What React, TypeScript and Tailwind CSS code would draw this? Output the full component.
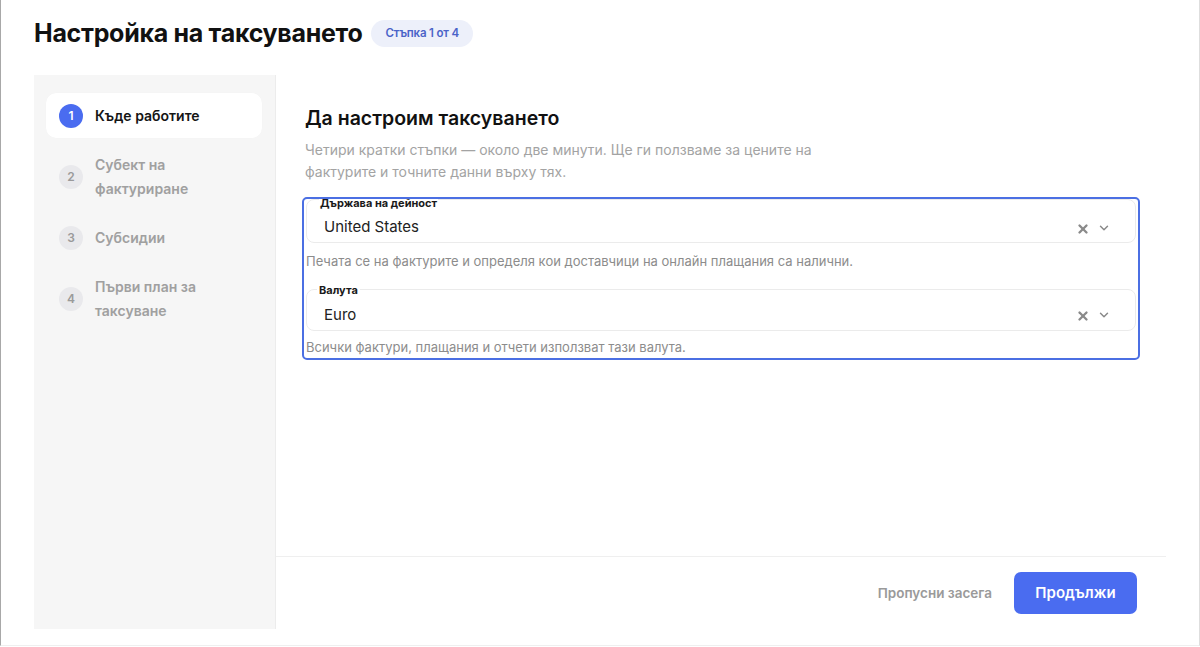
import { ChevronDown, X } from 'lucide-react';

const steps = [
  { n: 1, label: 'Къде работите' },
  { n: 2, label: 'Субект на фактуриране' },
  { n: 3, label: 'Субсидии' },
  { n: 4, label: 'Първи план за таксуване' },
];

function Select({ label, value, first }: { label: string; value: string; first?: boolean }) {
  return (
    <div
      className={
        first
          ? 'relative flex h-[44px] items-center rounded-lg border border-[#ebebeb] bg-white pl-[17px] pr-[24px] pt-[13px]'
          : 'relative flex h-[42px] items-center rounded-lg border border-[#ebebeb] bg-white pl-[17px] pr-[24px] pt-[10px]'
      }
    >
      <span
        className={
          first
            ? 'absolute left-[12px] top-[-3px] bg-white px-[1px] text-[11px] font-bold leading-[12px] text-[#1a1a1a]'
            : 'absolute left-[10px] top-[-6px] bg-white px-[2px] text-[11px] font-bold leading-[12px] text-[#1a1a1a]'
        }
      >
        {label}
      </span>
      <span className="flex-1 text-[15px] text-[#222]">{value}</span>
      <X className="mt-[2px] h-[14px] w-[14px] text-[#8a8a8a]" strokeWidth={4} />
      <ChevronDown className="ml-[7px] h-[14px] w-[14px] text-[#8a8a8a]" strokeWidth={2.5} />
    </div>
  );
}

export default function App() {
  return (
    <div
      className="h-[646px] w-[1200px] border-b border-l border-r border-b-[#efefef] border-l-[#a8a8a8] border-r-[#dedede] bg-white px-[33px]"
      style={{ fontFamily: 'Inter, "Noto Sans", sans-serif' }}
    >
      <header className="flex h-[66px] items-center gap-[9px] pt-[1px]">
        <h1 className="text-[25px] font-bold tracking-[-0.3px] text-[#111]">Настройка на таксуването</h1>
        <span className="rounded-full bg-[#edf0fa] px-[14px] py-[5px] text-[11.5px] font-semibold tracking-[-0.2px] text-[#4a63c8]">
          Стъпка 1 от 4
        </span>
      </header>

      <div className="mt-[9px] flex h-[554px]">
        <aside className="flex w-[242px] flex-col gap-[5px] border-r border-[#ececec] bg-[#f6f6f6] pl-[12px] pr-[13px] pt-[18px]">
          {steps.map((s) => {
            const active = s.n === 1;
            return (
              <div
                key={s.n}
                className={
                  active
                    ? 'flex items-center gap-[12px] rounded-[10px] bg-white py-[10.5px] pl-[13px] shadow-[0_0_1px_rgba(0,0,0,0.04)]'
                    : 'flex items-center gap-[12px] rounded-[10px] py-[10px] pl-[13px]'
                }
              >
                <span
                  className={
                    active
                      ? 'flex h-[24px] w-[24px] shrink-0 items-center justify-center rounded-full bg-[#4a6cf0] text-[12px] font-semibold text-white'
                      : 'flex h-[24px] w-[24px] shrink-0 items-center justify-center rounded-full bg-[#e9e9ec] text-[12px] font-semibold text-[#9a9a9a]'
                  }
                >
                  {s.n}
                </span>
                <span
                  className={
                    active
                      ? 'w-[140px] text-[14px] font-semibold leading-6 text-[#151515]'
                      : 'w-[140px] text-[14px] font-semibold leading-6 text-[#a0a0a0]'
                  }
                >
                  {s.label}
                </span>
              </div>
            );
          })}
        </aside>

        <section className="flex flex-1 flex-col">
          <div className="h-[481px] pl-[29px] pt-[29px]">
            <h2 className="text-[19.5px] font-semibold leading-[28px] text-[#111]">Да настроим таксуването</h2>
            <p className="mt-[7px] w-[530px] text-[14px] leading-[22px] text-[#a3a3a3]">
              Четири кратки стъпки — около две минути. Ще ги ползваме за цените на фактурите и точните данни върху тях.
            </p>

            <div className="-ml-[3px] mt-[14px] w-[838px] overflow-hidden rounded-[5px] border-2 border-[#4b6fe3] px-[2px] pb-[2px]">
              <Select label="Държава на дейност" value="United States" first />
              <p className="mt-[9px] text-[13px] leading-[18px] text-[#8c8c8c]">
                Печата се на фактурите и определя кои доставчици на онлайн плащания са налични.
              </p>
              <div className="mt-[19px]">
                <Select label="Валута" value="Euro" />
              </div>
              <p className="mt-[7px] text-[13px] leading-[18px] text-[#8c8c8c]">
                Всички фактури, плащания и отчети използват тази валута.
              </p>
            </div>
          </div>

          <footer className="flex h-[73px] items-center justify-end gap-[6px] border-t border-[#efefef] pr-[29px]">
            <button className="px-[16px] py-[10px] text-[13.5px] font-semibold text-[#9a9a9a]">Пропусни засега</button>
            <button className="h-[42px] w-[123px] rounded-[7px] bg-[#4a6cf0] text-[15px] font-semibold text-white">
              Продължи
            </button>
          </footer>
        </section>
      </div>
    </div>
  );
}
